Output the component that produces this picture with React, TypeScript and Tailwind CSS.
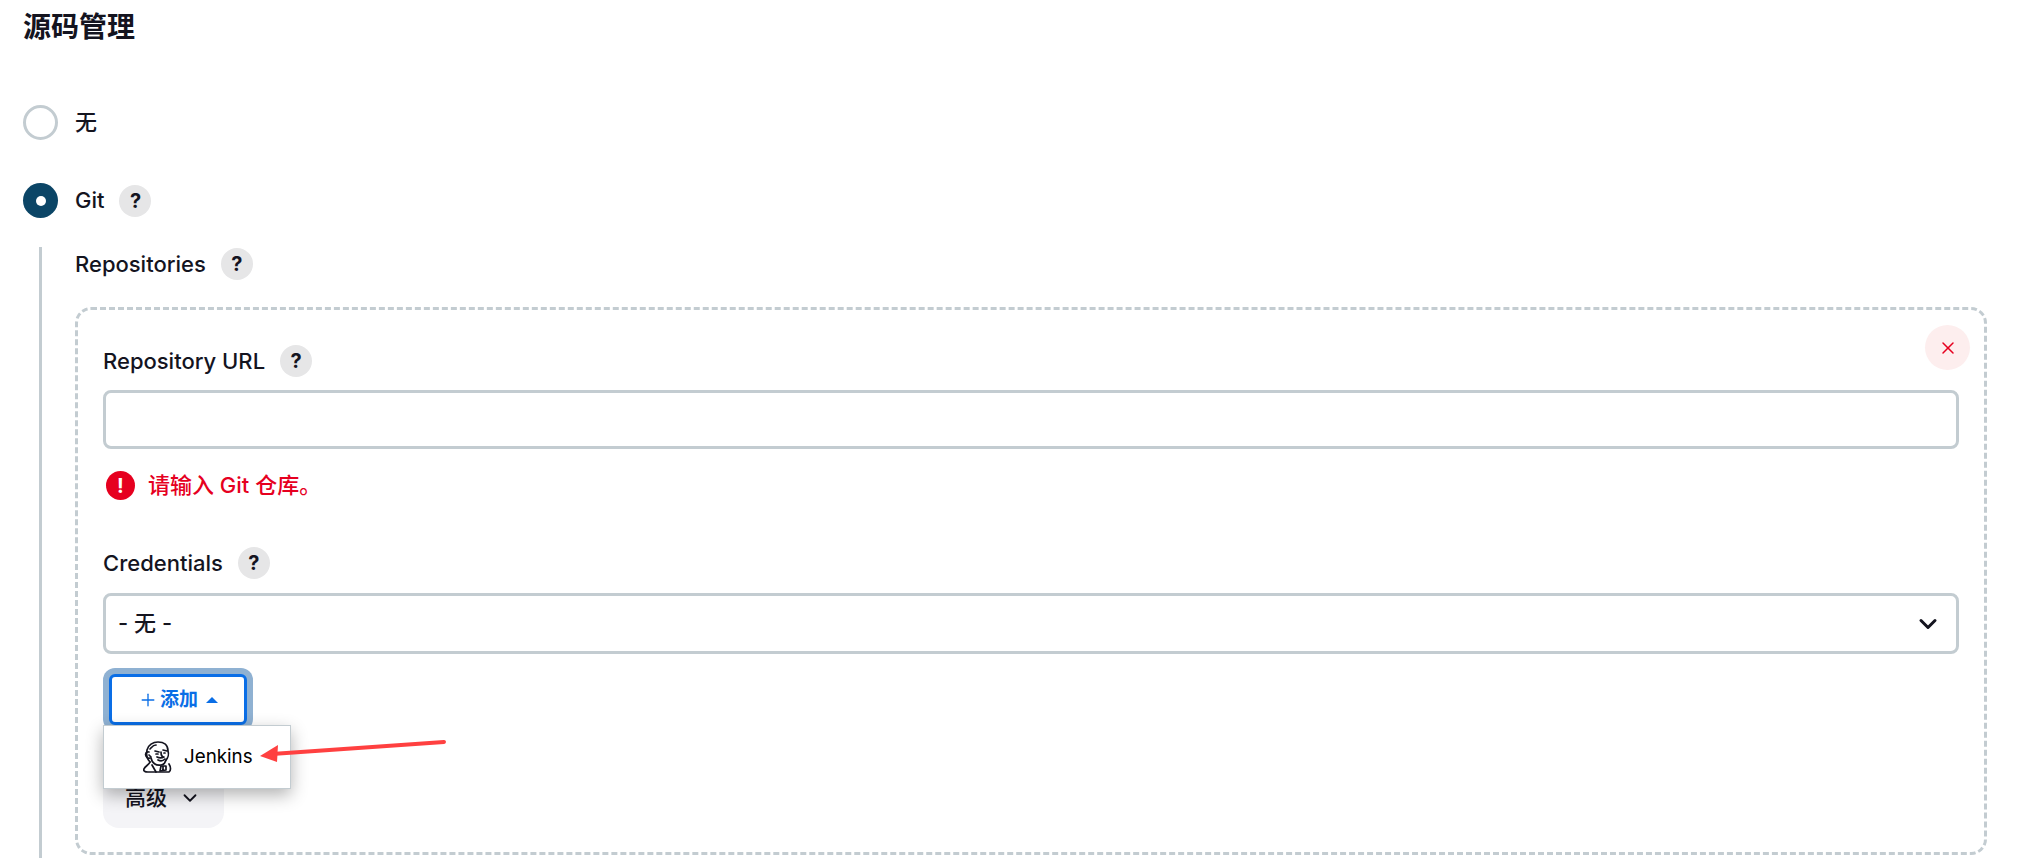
import { ChevronDown, Plus, X } from "lucide-react";

function Help() {
  return (
    <span className="flex h-8 w-8 shrink-0 items-center justify-center rounded-full bg-[#e6e6e7] text-[20px] font-bold text-[#14141f]">
      ?
    </span>
  );
}

function JenkinsIcon() {
  return (
    <svg width="30" height="32" viewBox="0 0 30 32" fill="none" stroke="#14141f" strokeWidth="1.7" strokeLinecap="round" strokeLinejoin="round">
      <path d="M7 21C4 18 3 14 4 9C5 4 10 1 15 1C21 1 25 4 25 10C26 13 25 17 23 19" />
      <path d="M6 11C3 10 2 13 3 15C4 17 5 18 7 17" />
      <path d="M7 8C9 6 10 4 13 4M6 14L8 16" />
      <path d="M12 10L16 11M20 9L24 10M13 13L15 13M21 12L22 12" />
      <path d="M18 11C18 14 19 16 21 16C19 17 16 17 14 16M15 19C17 20 20 20 22 18" />
      <path d="M8 17C9 22 13 25 18 24C20 24 22 22 23 19" />
      <path d="M7 21C6 24 2 25 1 28C0 30 2 31 5 31L26 31C28 30 28 26 26 23" />
      <path d="M9 24L13 31M18 25L17 30L23 29L23 25L18 25M20 25L20 29" />
    </svg>
  );
}

export default function App() {
  return (
    <div className="flex h-[858px] flex-col overflow-hidden bg-white pl-[23px] pr-[53px] pt-2 font-['Inter','Noto_Sans_CJK_SC',sans-serif] text-[22px] font-[450] text-[#14141f]">
      <h2 className="text-[28px] font-bold leading-[38px]">源码管理</h2>

      <div className="mt-[59px] flex h-[35px] items-center">
        <span className="h-[35px] w-[35px] rounded-full border-[3px] border-[#c3ccd1] bg-white" />
        <span className="ml-[17px]">无</span>
      </div>

      <div className="mt-[43px] flex h-[35px] items-center">
        <span className="flex h-[35px] w-[35px] items-center justify-center rounded-full bg-[#0b4566]">
          <span className="h-[10px] w-[10px] rounded-full bg-white" />
        </span>
        <span className="ml-[17px]">Git</span>
        <span className="ml-[15px]">
          <Help />
        </span>
      </div>

      <div className="ml-4 mt-[29px] flex flex-1 flex-col border-l-[3px] border-[#c3ccd1] pl-[33px]">
        <div className="mt-px flex h-8 items-center gap-[15px]">
          <span>Repositories</span>
          <Help />
        </div>

        <div className="relative mt-[27px] rounded-[16px] border-[3px] border-dashed border-[#c3ccd1] px-[25px] pb-[24px] pt-[35px]">
          <button className="absolute right-[14px] top-[15px] flex h-[45px] w-[45px] items-center justify-center rounded-full bg-[#fdeeee] text-[#e6001f]">
            <X size={20} strokeWidth={1.8} />
          </button>

          <div className="flex h-8 items-center gap-[15px]">
            <span>Repository URL</span>
            <Help />
          </div>
          <div className="mt-[13px] h-[59px] rounded-lg border-[3px] border-[#c3ccd1] bg-white" />

          <div className="mt-[22px] flex h-[29px] items-center pl-[3px] font-medium text-[#e6001f]">
            <span className="flex h-[29px] w-[29px] items-center justify-center rounded-full bg-[#e6001f] text-[20px] font-bold text-white">
              !
            </span>
            <span className="ml-[13px]">请输入 Git 仓库。</span>
          </div>

          <div className="mt-[47px] flex h-8 items-center gap-[15px]">
            <span>Credentials</span>
            <Help />
          </div>
          <div className="mt-[14px] flex h-[61px] items-center justify-between rounded-lg border-[3px] border-[#c3ccd1] bg-white pl-[12px] pr-[14px]">
            <span>- 无 -</span>
            <ChevronDown size={28} strokeWidth={2.6} />
          </div>

          <div className="relative pt-[20px]">
            <button className="ml-[6px] flex h-[51px] w-[138px] items-center justify-center rounded-[6px] border-[3px] border-[#0a6ee6] bg-white pt-px text-[19px] font-semibold text-[#0a6ee6] shadow-[0_0_0_6px_#8fb1d2]">
              <Plus size={20} strokeWidth={1.6} />
              <span className="ml-[2px]">添加</span>
              <span className="ml-2 h-0 w-0 border-x-[6px] border-b-[6px] border-x-transparent border-b-[#0a6ee6]" />
            </button>

            <div className="mt-[57px] flex h-[46px] w-[121px] items-end rounded-b-[16px] bg-[#f4f4f7] pb-[15px] pl-[22px] text-[21px] font-medium leading-[30px]">
              高级
              <ChevronDown size={22} strokeWidth={2} className="mb-1 ml-[12px]" />
            </div>

            <div className="absolute left-0 top-[71px] flex h-[64px] w-[188px] items-center border border-[#c3ccd1] bg-white pl-[39px] text-[18.8px] font-normal text-black shadow-[0_6px_16px_rgba(0,0,0,0.3)]">
              <JenkinsIcon />
              <span className="ml-[11px]">Jenkins</span>
            </div>

            <svg className="absolute left-[155px] top-[85px]" width="190" height="32" viewBox="0 0 190 32" fill="none">
              <path d="M186 3L14 15" stroke="#ff4040" strokeWidth="4" strokeLinecap="round" />
              <path d="M2 17L20 6L19 23Z" fill="#ff4040" />
            </svg>
          </div>
        </div>
      </div>
    </div>
  );
}
